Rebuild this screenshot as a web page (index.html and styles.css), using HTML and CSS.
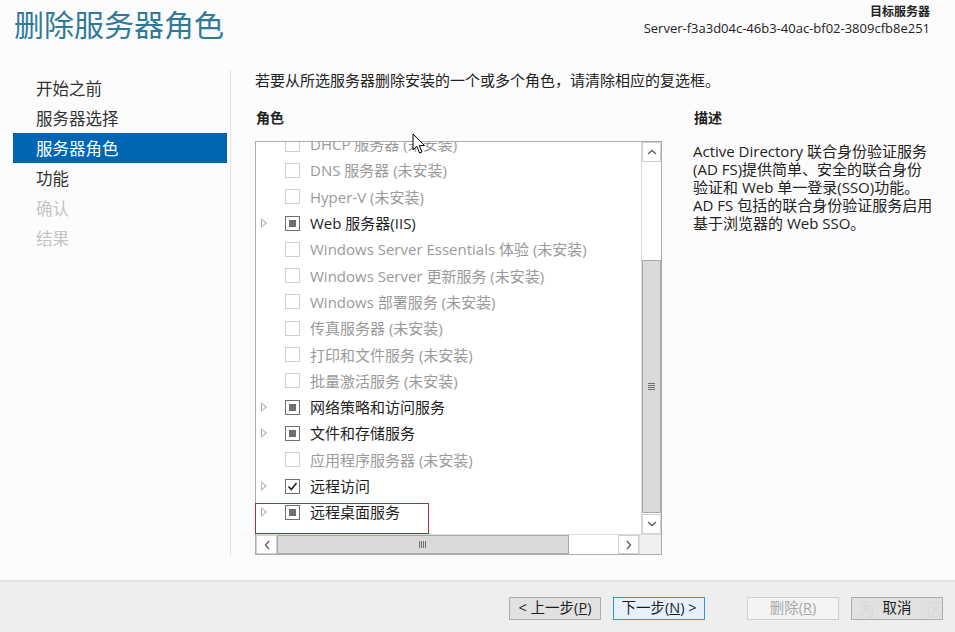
FILE: index.html
```html
<!DOCTYPE html>
<html lang="zh-CN">
<head>
<meta charset="utf-8">
<title>删除服务器角色</title>
<link rel="stylesheet" href="styles.css">
</head>
<body>
<div class="window">
  <header class="header">
    <h1 class="title">删除服务器角色</h1>
    <div class="target">
      <div class="target-label">目标服务器</div>
      <div class="target-name">Server-f3a3d04c-46b3-40ac-bf02-3809cfb8e251</div>
    </div>
  </header>

  <div class="body">
    <nav class="nav">
      <div class="nav-item">开始之前</div>
      <div class="nav-item">服务器选择</div>
      <div class="nav-item active">服务器角色</div>
      <div class="nav-item">功能</div>
      <div class="nav-item disabled">确认</div>
      <div class="nav-item disabled">结果</div>
    </nav>

    <main class="main">
      <p class="intro">若要从所选服务器删除安装的一个或多个角色，请清除相应的复选框。</p>
      <div class="columns">
        <section class="roles">
          <h2 class="section-title">角色</h2>
          <div class="listbox">
            <div class="list-area">
              <div class="list-view">
                <ul class="list">
                  <li class="row dim"><span class="exp"></span><span class="cb"></span><span class="lbl">DHCP 服务器 (未安装)</span></li>
                  <li class="row dim"><span class="exp"></span><span class="cb"></span><span class="lbl">DNS 服务器 (未安装)</span></li>
                  <li class="row dim"><span class="exp"></span><span class="cb"></span><span class="lbl">Hyper-V (未安装)</span></li>
                  <li class="row"><span class="exp tri"></span><span class="cb partial"></span><span class="lbl">Web 服务器(IIS)</span></li>
                  <li class="row dim"><span class="exp"></span><span class="cb"></span><span class="lbl">Windows Server Essentials 体验 (未安装)</span></li>
                  <li class="row dim"><span class="exp"></span><span class="cb"></span><span class="lbl">Windows Server 更新服务 (未安装)</span></li>
                  <li class="row dim"><span class="exp"></span><span class="cb"></span><span class="lbl">Windows 部署服务 (未安装)</span></li>
                  <li class="row dim"><span class="exp"></span><span class="cb"></span><span class="lbl">传真服务器 (未安装)</span></li>
                  <li class="row dim"><span class="exp"></span><span class="cb"></span><span class="lbl">打印和文件服务 (未安装)</span></li>
                  <li class="row dim"><span class="exp"></span><span class="cb"></span><span class="lbl">批量激活服务 (未安装)</span></li>
                  <li class="row"><span class="exp tri"></span><span class="cb partial"></span><span class="lbl">网络策略和访问服务</span></li>
                  <li class="row"><span class="exp tri"></span><span class="cb partial"></span><span class="lbl">文件和存储服务</span></li>
                  <li class="row dim"><span class="exp"></span><span class="cb"></span><span class="lbl">应用程序服务器 (未安装)</span></li>
                  <li class="row"><span class="exp tri"></span><span class="cb checked"><svg viewBox="0 0 15 15" width="15" height="15"><path d="M3.5 7.5 L6.3 10.5 L11.5 4" fill="none" stroke="#222" stroke-width="1.6"/></svg></span><span class="lbl">远程访问</span></li>
                  <li class="row"><span class="exp tri"></span><span class="cb partial"></span><span class="lbl">远程桌面服务</span></li>
                </ul>
              </div>
              <div class="vscroll">
                <div class="sb-btn"><svg viewBox="0 0 10 6" width="10" height="6"><path d="M1 5 L5 1.5 L9 5" fill="none" stroke="#606060" stroke-width="1.4"/></svg></div>
                <div class="v-track">
                  <div class="v-space"></div>
                  <div class="v-thumb"><span class="grip-h"></span></div>
                </div>
                <div class="sb-btn"><svg viewBox="0 0 10 6" width="10" height="6"><path d="M1 1 L5 4.5 L9 1" fill="none" stroke="#606060" stroke-width="1.4"/></svg></div>
              </div>
            </div>
            <div class="hscroll">
              <div class="sb-btn h"><svg viewBox="0 0 6 10" width="6" height="10"><path d="M5 1 L1.5 5 L5 9" fill="none" stroke="#606060" stroke-width="1.4"/></svg></div>
              <div class="h-track">
                <div class="h-thumb"><span class="grip-v"></span></div>
                <div class="h-space"></div>
              </div>
              <div class="sb-btn h"><svg viewBox="0 0 6 10" width="6" height="10"><path d="M1 1 L4.5 5 L1 9" fill="none" stroke="#606060" stroke-width="1.4"/></svg></div>
              <div class="corner"></div>
            </div>
            <div class="highlight"></div>
          </div>
        </section>

        <aside class="desc">
          <h2 class="section-title">描述</h2>
          <p class="desc-text">Active Directory 联合身份验证服务<br>(AD FS)提供简单、安全的联合身份<br>验证和 Web 单一登录(SSO)功能。<br>AD FS 包括的联合身份验证服务启用<br>基于浏览器的 Web SSO。</p>
        </aside>
      </div>
    </main>
  </div>

  <footer class="footer">
    <button class="btn">&lt; 上一步(<u>P</u>)</button>
    <button class="btn focused">下一步(<u>N</u>) &gt;</button>
    <button class="btn disabled gap">删除(<u>R</u>)</button>
    <button class="btn">取消</button>
    <span class="wm wm-left">为</span>
    <span class="wm wm-right">区</span>
  </footer>

  <svg class="cursor" width="14" height="22" viewBox="0 0 14 22"><path d="M1 1 L1 17 L4.8 13.4 L7.6 20 L10 19 L7.3 12.6 L12.5 12.6 Z" fill="#fff" stroke="#000" stroke-width="1"/></svg>
</div>
</body>
</html>
```

FILE: styles.css
```css
* { box-sizing: border-box; }
html, body { margin: 0; padding: 0; }
body {
  width: 955px;
  height: 632px;
  overflow: hidden;
  background: #fcfcfc;
  font-family: "Segoe UI", "Open Sans", "Noto Sans CJK SC", sans-serif;
  color: #1e1e1e;
}
.window {
  position: relative;
  width: 955px;
  height: 632px;
  display: flex;
  flex-direction: column;
}
.header {
  display: flex;
  justify-content: space-between;
  align-items: flex-start;
  height: 70px;
  padding: 0 25px 0 14px;
}
.title {
  margin: 3px 0 0 0;
  font-weight: normal;
  font-size: 30px;
  line-height: 40px;
  color: #2f7a98;
  font-family: "Noto Sans CJK SC", sans-serif;
}
.target {
  text-align: right;
  padding-top: 4px;
}
.target-label {
  font-size: 12px;
  font-weight: bold;
  line-height: 16px;
  color: #222;
}
.target-name {
  font-size: 13px;
  line-height: 17px;
  color: #222;
}
.body {
  display: flex;
  flex: 1;
}
.nav {
  width: 231px;
  padding: 3px 0 0 13px;
  border-right: 1px solid #e3e3e3;
  margin-bottom: 24px;
}
.nav-item {
  height: 30px;
  line-height: 30px;
  padding-left: 23px;
  font-size: 16.5px;
  color: #333;
  font-family: "Noto Sans CJK SC", sans-serif;
}
.nav-item.active {
  background: #0066b4;
  color: #fff;
  margin-right: 3px;
}
.nav-item.disabled { color: #c4c4c4; }
.main {
  flex: 1;
  padding: 0 0 0 24px;
}
.intro {
  margin: 0;
  font-size: 15px;
  line-height: 20px;
  color: #222;
}
.columns {
  display: flex;
  margin-top: 19px;
}
.section-title {
  margin: 0 0 14px 1px;
  font-size: 14px;
  font-weight: bold;
  line-height: 18px;
  color: #222;
}
.roles { width: 407px; }
.listbox {
  position: relative;
  width: 407px;
  height: 414px;
  border: 1px solid #acacac;
  background: #fff;
  display: flex;
  flex-direction: column;
}
.list-area {
  display: flex;
  flex: 1;
  min-height: 0;
}
.list-view {
  flex: 1;
  overflow: hidden;
}
.list {
  list-style: none;
  margin: -11px 0 0 0;
  padding: 0;
}
.row {
  height: 26.3px;
  display: flex;
  align-items: center;
  font-size: 15px;
  color: #1e1e1e;
  white-space: nowrap;
}
.row.dim { color: #9a9a9a; }
.exp {
  width: 29px;
  height: 15px;
  flex: none;
  position: relative;
}
.exp.tri::before {
  content: "";
  position: absolute;
  left: 5px;
  top: 2px;
  width: 0;
  height: 0;
  border-left: 6px solid #b4b4b4;
  border-top: 5px solid transparent;
  border-bottom: 5px solid transparent;
}
.exp.tri::after {
  content: "";
  position: absolute;
  left: 6px;
  top: 4px;
  width: 0;
  height: 0;
  border-left: 3.5px solid #fff;
  border-top: 3px solid transparent;
  border-bottom: 3px solid transparent;
}
.cb {
  width: 15px;
  height: 15px;
  flex: none;
  border: 1px solid #cfcfcf;
  background: #fff;
  margin-right: 10px;
  display: flex;
  align-items: center;
  justify-content: center;
}
.row:not(.dim) .cb { border-color: #707070; }
.cb.partial::after {
  content: "";
  width: 7px;
  height: 7px;
  background: #6e6e6e;
}
.cb.checked svg { display: block; margin: -1px; }
.lbl { line-height: 20px; }

.vscroll {
  width: 20px;
  flex: none;
  display: flex;
  flex-direction: column;
  border-left: 1px solid #dcdcdc;
  background: #fff;
}
.sb-btn {
  height: 20px;
  flex: none;
  display: flex;
  align-items: center;
  justify-content: center;
  background: #fff;
  border: 1px solid #d0d0d0;
}
.v-track {
  flex: 1;
  display: flex;
  flex-direction: column;
}
.v-space { height: 98px; flex: none; }
.v-thumb {
  flex: 1;
  background: #dadada;
  border: 1px solid #a8a8a8;
  display: flex;
  align-items: center;
  justify-content: center;
  margin-bottom: 1px;
}
.grip-h {
  width: 7px;
  height: 8px;
  background: repeating-linear-gradient(to bottom, #6e6e6e 0 1px, transparent 1px 2px);
}
.hscroll {
  height: 20px;
  flex: none;
  display: flex;
  border-top: 1px solid #dcdcdc;
}
.sb-btn.h { width: 21px; height: auto; }
.h-track {
  flex: 1;
  display: flex;
}
.h-thumb {
  width: 292px;
  background: #dadada;
  border: 1px solid #a8a8a8;
  display: flex;
  align-items: center;
  justify-content: center;
}
.grip-v {
  width: 8px;
  height: 7px;
  background: repeating-linear-gradient(to right, #6e6e6e 0 1px, transparent 1px 2px);
}
.h-space { flex: 1; }
.corner {
  width: 22px;
  flex: none;
  background: #f0f0f0;
  border-left: 1px solid #dcdcdc;
}
.highlight {
  position: absolute;
  left: -1px;
  top: 361px;
  width: 174px;
  height: 31px;
  border: 1px solid #b2273a;
  pointer-events: none;
}
.desc {
  margin-left: 31px;
  width: 262px;
}
.desc-text {
  margin: 0;
  padding-top: 1px;
  font-size: 15px;
  line-height: 18px;
  color: #222;
  white-space: nowrap;
}
.footer {
  position: relative;
  height: 52px;
  flex: none;
  background: #eeeeee;
  border-top: 2px solid #e2e2e2;
  display: flex;
  align-items: center;
  padding: 2px 0 0 509px;
  gap: 12px;
}
.btn {
  width: 92px;
  height: 23px;
  border: 1px solid #adadad;
  background: #e1e1e1;
  font-family: "Segoe UI", "Open Sans", "Noto Sans CJK SC", sans-serif;
  font-size: 14.5px;
  line-height: 20px;
  color: #1e1e1e;
  padding: 0;
}
.btn.focused {
  border-color: #3b93de;
  background: #e5f1fb;
}
.btn.disabled {
  color: #a8a8a8;
  background: #f4f4f4;
  border-color: #cfcfcf;
}
.btn.gap { margin-left: 30px; }
.wm {
  position: absolute;
  top: 14px;
  font-size: 17px;
  color: rgba(200,200,200,0.35);
  pointer-events: none;
}
.wm-left { left: 858px; }
.wm-right { left: 926px; }
.cursor {
  position: absolute;
  left: 412px;
  top: 133px;
}
```
